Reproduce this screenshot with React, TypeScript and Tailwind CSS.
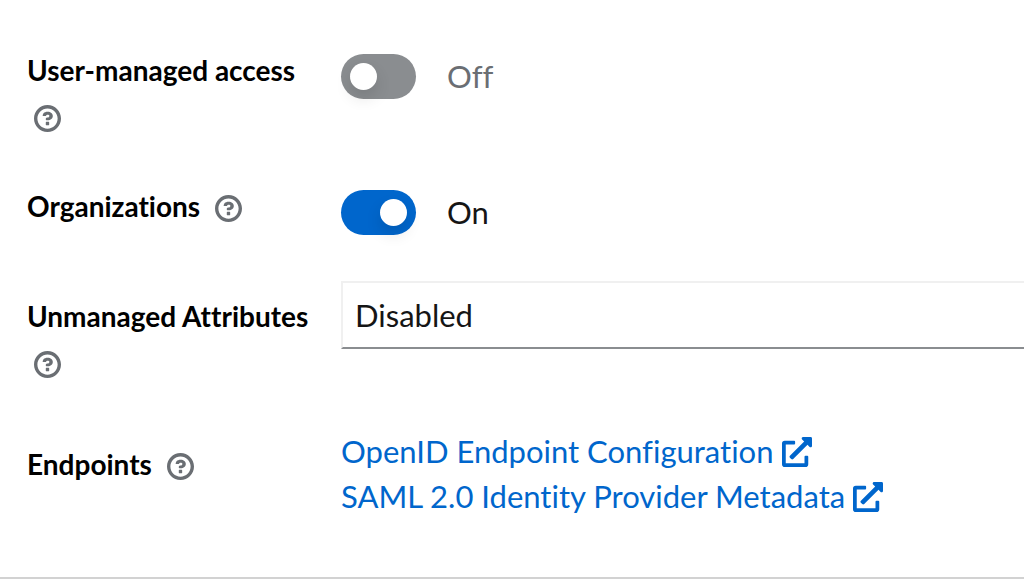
import type { ReactNode } from "react";
import { FaExternalLinkAlt } from "react-icons/fa";

function HelpIcon() {
  return (
    <svg
      viewBox="0 0 1024 1024"
      className="h-[27px] w-[27px]"
      fill="currentColor"
      aria-hidden="true"
    >
      <path d="M521.3 576C627.5 576 713.7 502 713.7 413.7S627.6 253.6 521.3 253.6C366 253.6 334.5 337.7 329.2 407.2c0 7.1 6 8.8 14.3 8.8H445c5.500 0 13-.5 15.8-9.500 0-43.9 122.1-49.4 122.1 7.1 0 28.3-26.7 57.3-61.6 59.4s-74 6.800-74 48.700v32.100c0 17 8.800 22.200 24.700 22.200h49.300zM575.3 751.3v-96a16 16 0 0 0-16-16h-96a16 16 0 0 0-16 16v96a16 16 0 0 0 16 16h96a16 16 0 0 0 16-16z" />
      <path
        fillRule="evenodd"
        d="M512 896C300.2 896 128 723.9 128 512S300.3 128 512 128s384 172.3 384 384-172.2 384-384 384zM512 0C229.7 0 0 229.8 0 512s229.8 512 512 512 512-229.8 512-512S794.4 0 512 0z"
      />
    </svg>
  );
}

function RowLabel({ id, children }: { id: string; children: string }) {
  return (
    <div className="flex flex-wrap content-start items-start gap-x-2">
      <label
        id={`${id}-label`}
        htmlFor={id}
        className="text-[28px] leading-[46px] font-bold whitespace-nowrap text-black"
      >
        {children}
      </label>
      <button
        type="button"
        aria-label={`Help for ${children}`}
        className="flex h-[50px] items-center px-[7px] text-[#6a6e73]"
      >
        <HelpIcon />
      </button>
    </div>
  );
}

function Switch({ id, defaultChecked }: { id: string; defaultChecked?: boolean }) {
  return (
    <div className="group flex h-[45px] items-center gap-[31px] self-start">
      <input
        id={id}
        type="checkbox"
        role="switch"
        defaultChecked={defaultChecked}
        className="h-[45px] w-[75px] cursor-pointer appearance-none rounded-full bg-[#8a8d90] p-[9px] before:block before:h-[27px] before:w-[27px] before:rounded-full before:bg-white before:shadow-[0_8px_16px_rgba(3,3,3,0.12)] checked:bg-[#0066cc] checked:before:ml-auto"
      />
      <span className="text-[#6a6e73] group-has-checked:hidden">Off</span>
      <span className="hidden group-has-checked:inline">On</span>
    </div>
  );
}

function EndpointLink({ href, children }: { href: string; children: ReactNode }) {
  return (
    <a href={href} className="flex w-fit items-center gap-2 whitespace-nowrap">
      {children}
      <FaExternalLinkAlt className="h-[30px] w-[30px]" aria-hidden="true" />
    </a>
  );
}

const row = "grid grid-cols-[290px_1fr] gap-x-6";

export default function App() {
  return (
    <main className="overflow-hidden bg-white font-[Lato,sans-serif] text-[31px] text-[#151515] [font-variant-ligatures:none]">
      <form className="border-b-2 border-[#d2d2d2] pt-[47px] pb-[58px] pl-[27px]">
        <div className={`${row} mb-10`}>
          <RowLabel id="user-managed-access">User-managed access</RowLabel>
          <div className="pt-[7px]">
            <Switch id="user-managed-access" />
          </div>
        </div>

        <div className={`${row} mb-[46px]`}>
          <RowLabel id="organizations">Organizations</RowLabel>
          <div className="pt-[7px]">
            <Switch id="organizations" defaultChecked />
          </div>
        </div>

        <div className={`${row} mb-10`}>
          <div className="pt-3">
            <RowLabel id="unmanaged-attributes">Unmanaged Attributes</RowLabel>
          </div>
          <select
            id="unmanaged-attributes"
            className="h-[68px] w-full appearance-none rounded-none border-t-2 border-b-2 border-l-2 border-t-[#f0f0f0] border-b-[#8a8d90] border-l-[#f0f0f0] bg-white px-3"
          >
            <option>Disabled</option>
            <option>Enabled</option>
          </select>
        </div>

        <div className={row}>
          <div className="pt-3">
            <RowLabel id="endpoints">Endpoints</RowLabel>
          </div>
          <div
            id="endpoints"
            role="group"
            aria-labelledby="endpoints-label"
            className="leading-[45px] text-[#0066cc]"
          >
            <EndpointLink href="#openid">OpenID Endpoint Configuration</EndpointLink>
            <EndpointLink href="#saml">SAML 2.0 Identity Provider Metadata</EndpointLink>
          </div>
        </div>
      </form>
    </main>
  );
}
